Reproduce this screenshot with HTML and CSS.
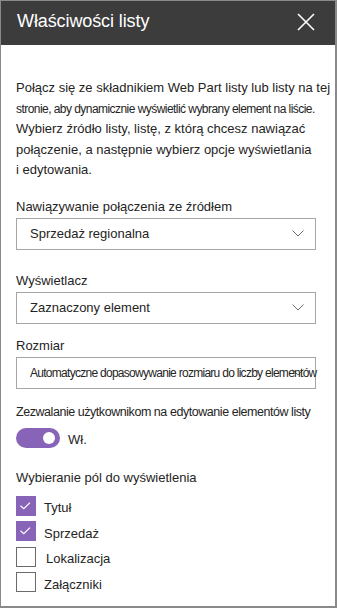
FILE: index.html
```html
<!DOCTYPE html>
<html lang="pl">
<head>
<meta charset="utf-8">
<link rel="stylesheet" href="styles.css">
</head>
<body>
<div class="panel">
  <div class="header">
    <div class="title">Właściwości listy</div>
    <svg class="close" width="18" height="18" viewBox="0 0 18 18"><path d="M1 1 L17 17 M17 1 L1 17" stroke="#fff" stroke-width="1.6" fill="none"/></svg>
  </div>
  <div class="content">
    <p class="desc">
      <span class="line">Połącz się ze składnikiem Web Part listy lub listy na tej</span>
      <span class="line tight">stronie, aby dynamicznie wyświetlić wybrany element na liście.</span>
      <span class="line">Wybierz źródło listy, listę, z którą chcesz nawiązać</span>
      <span class="line">połączenie, a następnie wybierz opcje wyświetlania</span>
      <span class="line">i edytowania.</span>
    </p>

    <div class="field f1">
      <div class="label">Nawiązywanie połączenia ze źródłem</div>
      <div class="select"><span class="value">Sprzedaż regionalna</span><svg class="chev" width="12" height="7" viewBox="0 0 12 7"><path d="M0.5 0.5 L6 6 L11.5 0.5" stroke="#6b6b6b" stroke-width="1" fill="none"/></svg></div>
    </div>

    <div class="field f2">
      <div class="label">Wyświetlacz</div>
      <div class="select"><span class="value">Zaznaczony element</span><svg class="chev" width="12" height="7" viewBox="0 0 12 7"><path d="M0.5 0.5 L6 6 L11.5 0.5" stroke="#6b6b6b" stroke-width="1" fill="none"/></svg></div>
    </div>

    <div class="field f3">
      <div class="label">Rozmiar</div>
      <div class="select"><span class="value overflow">Automatyczne dopasowywanie rozmiaru do liczby elementów</span><svg class="chev" width="12" height="7" viewBox="0 0 12 7"><path d="M0.5 0.5 L6 6 L11.5 0.5" stroke="#6b6b6b" stroke-width="1" fill="none"/></svg></div>
    </div>

    <div class="field f4">
      <div class="label long">Zezwalanie użytkownikom na edytowanie elementów listy</div>
      <div class="toggle-row">
        <span class="toggle"><span class="knob"></span></span>
        <span class="toggle-text">Wł.</span>
      </div>
    </div>

    <div class="field f5">
      <div class="label">Wybieranie pól do wyświetlenia</div>
      <div class="checks">
        <div class="check"><span class="box on"><svg width="20" height="20" viewBox="0 0 20 20"><path d="M4.5 9.8 L7.8 12.6 L14 6.6" stroke="#fff" stroke-width="1.2" fill="none"/></svg></span><span class="ctext">Tytuł</span></div>
        <div class="check"><span class="box on"><svg width="20" height="20" viewBox="0 0 20 20"><path d="M4.5 9.8 L7.8 12.6 L14 6.6" stroke="#fff" stroke-width="1.2" fill="none"/></svg></span><span class="ctext">Sprzedaż</span></div>
        <div class="check"><span class="box"></span><span class="ctext shift">Lokalizacja</span></div>
        <div class="check"><span class="box"></span><span class="ctext">Załączniki</span></div>
      </div>
    </div>
  </div>
</div>
</body>
</html>
```

FILE: styles.css
```css
* { box-sizing: border-box; }
html, body { margin: 0; padding: 0; background: #fff; }
body {
  font-family: "Liberation Sans", Arial, sans-serif;
  color: #252423;
}
.panel {
  width: 337px;
  height: 608px;
  border-top: 1px solid #8a8a8a;
  border-left: 1px solid #8a8a8a;
  border-right: 2px solid #8a8a8a;
  border-bottom: 2px solid #8a8a8a;
  display: flex;
  flex-direction: column;
  overflow: hidden;
}
.header {
  height: 44px;
  flex: none;
  background: #3c3c3c;
  display: flex;
  align-items: center;
  justify-content: space-between;
  padding: 0 20px 4px 16px;
}
.title {
  color: #fff;
  font-size: 18px;
  letter-spacing: -0.1px;
}
.close { display: block; margin-top: 2px; }
.content {
  padding: 33px 0 0 15px;
}
.desc {
  margin: 0;
  font-size: 13px;
  line-height: 20.5px;
}
.line { display: block; white-space: nowrap; }
.tight { font-size: 12px; letter-spacing: -0.55px; }
.label {
  font-size: 13px;
  line-height: 20px;
  white-space: nowrap;
}
.label.long { font-size: 12.5px; letter-spacing: -0.45px; }
.field.f1 { margin-top: 16px; }
.field.f2 { margin-top: 21px; }
.field.f3 { margin-top: 12px; }
.field.f4 { margin-top: 13px; }
.field.f5 { margin-top: 20px; }
.select {
  margin-top: 1px;
  width: 300px;
  height: 32px;
  border: 1px solid #a6a6a6;
  display: flex;
  align-items: center;
  justify-content: space-between;
  padding: 0 11px 0 13px;
  position: relative;
}
.value {
  font-size: 13px;
  white-space: nowrap;
}
.value.overflow {
  font-size: 12px;
  letter-spacing: -0.72px;
  position: absolute;
  left: 13px;
  top: 8px;
}
.chev { display: block; margin-left: auto; }
.toggle-row {
  display: flex;
  align-items: center;
  margin-top: 6px;
  height: 20px;
}
.toggle {
  width: 44px;
  height: 20px;
  border-radius: 10px;
  background: #8764b8;
  position: relative;
  display: block;
}
.knob {
  position: absolute;
  width: 12px;
  height: 12px;
  border-radius: 50%;
  background: #fff;
  right: 5px;
  top: 4px;
}
.toggle-text {
  font-size: 13px;
  margin-left: 8px;
  margin-top: 4px;
}
.checks {
  margin-top: 8px;
  display: flex;
  flex-direction: column;
  gap: 5.5px;
}
.check {
  display: flex;
  align-items: center;
  height: 20px;
}
.box {
  width: 20px;
  height: 20px;
  border: 1px solid #6b6b6b;
  display: block;
  flex: none;
}
.box.on {
  background: #8764b8;
  border-color: #8764b8;
}
.box svg { display: block; margin: -1px; }
.ctext {
  font-size: 13px;
  margin-left: 8px;
  margin-top: 4px;
}
.ctext.shift { margin-left: 10px; }
```
